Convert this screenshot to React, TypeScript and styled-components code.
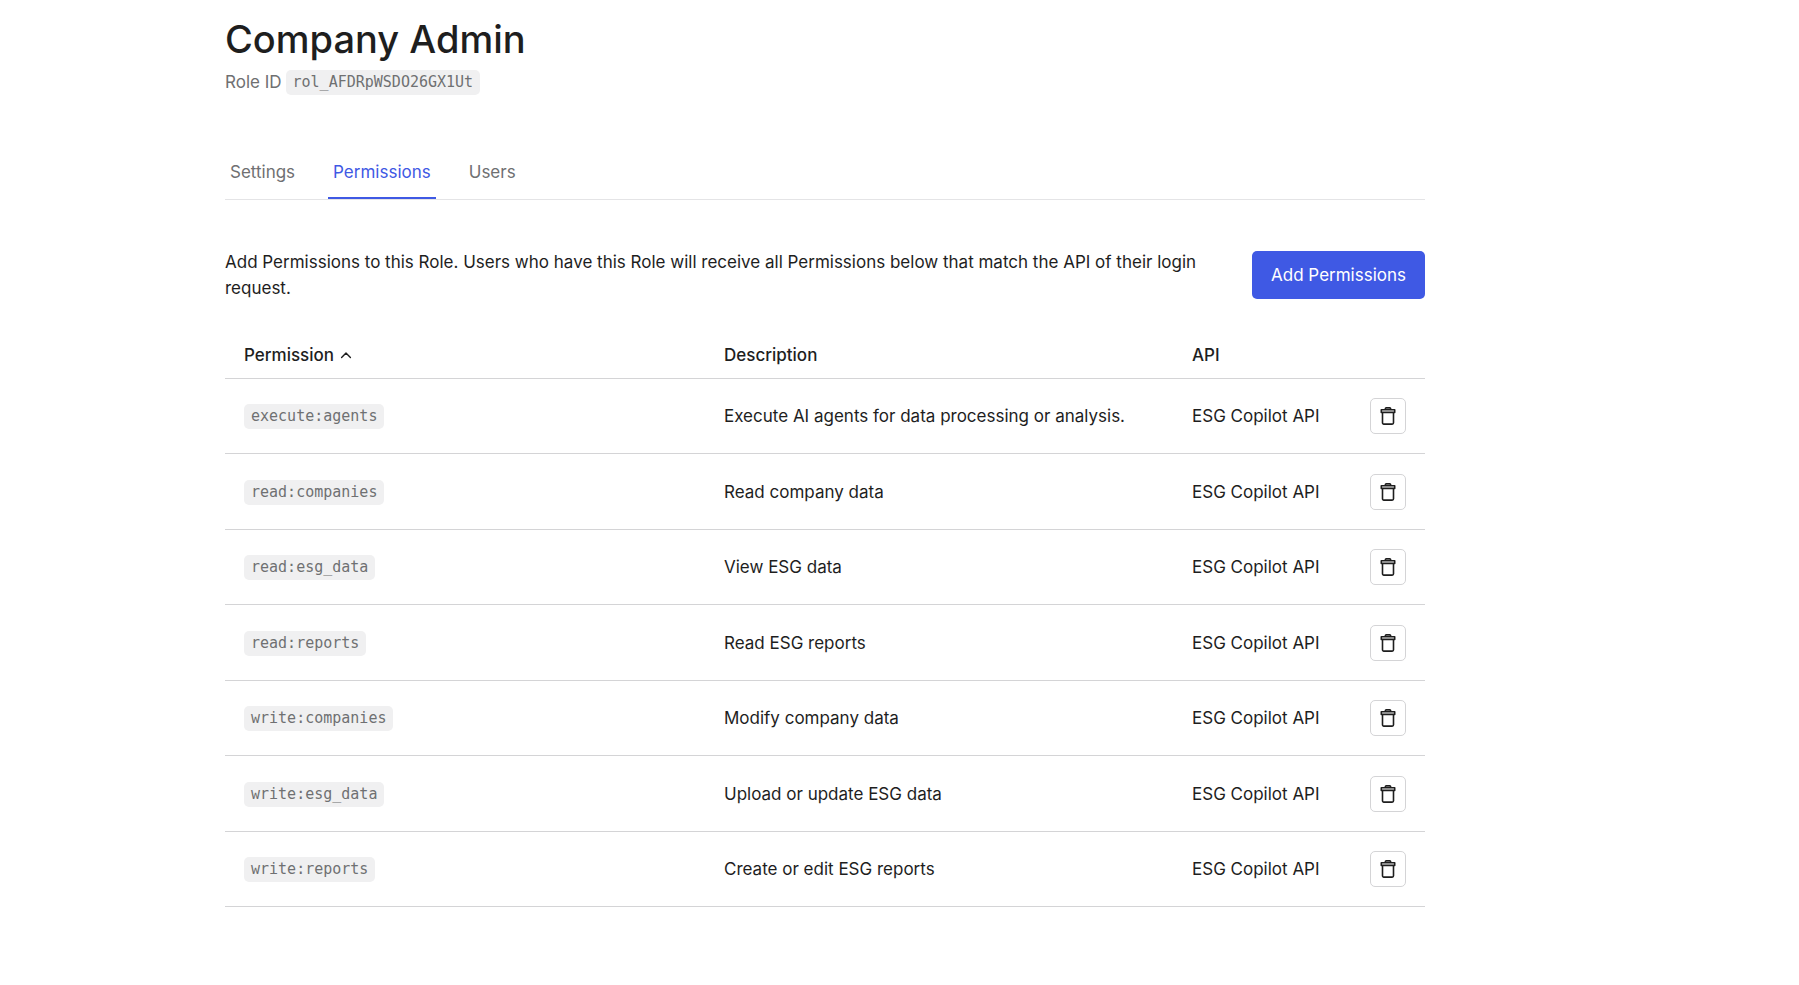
import React from 'react';
import styled, { createGlobalStyle } from 'styled-components';

const ink = '#1e1e1e';
const muted = '#6f7072';
const accent = '#3f59e4';
const line = '#d4d4d6';

const GlobalStyle = createGlobalStyle`
  *, *::before, *::after { box-sizing: border-box; }
  body {
    margin: 0;
    background: #fff;
    color: ${ink};
    font: 400 17px/26px Inter, "Liberation Sans", sans-serif;
  }
`;

const Page = styled.main`
  max-width: 1574px;
  padding: 15px 24px 48px 225px;
`;

const Content = styled.div`
  max-width: 1200px;
`;

const Title = styled.h1`
  margin: 0;
  font-size: 38px;
  line-height: 48px;
  font-weight: 500;
`;

const RoleLine = styled.p`
  display: flex;
  align-items: center;
  gap: 4px;
  margin: 6px 0 0;
  color: ${muted};
`;

const Code = styled.code`
  display: inline-block;
  padding: 0 7px;
  border-radius: 5px;
  background: #f0f0f1;
  color: ${muted};
  font: 400 15px/25px "DejaVu Sans Mono", monospace;
  vertical-align: middle;
`;

const Tabs = styled.nav`
  display: flex;
  gap: 28px;
  margin-top: 50px;
  border-bottom: 1px solid #e4e4e6;
`;

const Tab = styled.a<{ $active?: boolean }>`
  padding: 14px 5px 12px;
  border-bottom: 2px solid ${({ $active }) => ($active ? accent : 'transparent')};
  color: ${({ $active }) => ($active ? accent : muted)};
  text-decoration: none;
`;

const Intro = styled.section`
  display: flex;
  align-items: center;
  justify-content: space-between;
  gap: 48px;
  margin-top: 49px;
`;

const IntroText = styled.p`
  margin: 0;
  flex: 1;
`;

const AddButton = styled.button`
  height: 48px;
  padding: 0 19px;
  border: 0;
  border-radius: 5px;
  background: ${accent};
  color: #fff;
  font: inherit;
  white-space: nowrap;
  cursor: pointer;
`;

const Table = styled.table`
  width: 100%;
  margin-top: 31px;
  border-collapse: separate;
  border-spacing: 0;
  table-layout: fixed;
`;

const Head = styled.th<{ $width?: string }>`
  width: ${({ $width }) => $width ?? 'auto'};
  height: 47px;
  padding: 0 0 0 19px;
  border-bottom: 1px solid ${line};
  font-weight: 500;
  text-align: left;
`;

const SortButton = styled.button`
  display: flex;
  align-items: center;
  gap: 6px;
  padding: 0;
  border: 0;
  background: none;
  color: inherit;
  font: inherit;
  cursor: pointer;
`;

const Row = styled.tr`
  height: 75px;

  &:nth-child(even) {
    height: 76px;
  }
`;

const Cell = styled.td`
  padding: 0 0 0 19px;
  border-bottom: 1px solid ${line};
`;

const ActionCell = styled(Cell)`
  padding: 0 19px 0 0;
`;

const DeleteButton = styled.button`
  display: flex;
  align-items: center;
  justify-content: center;
  width: 36px;
  height: 36px;
  margin-left: auto;
  padding: 0;
  border: 1px solid ${line};
  border-radius: 5px;
  background: #fff;
  color: ${ink};
  cursor: pointer;
`;

const TrashIcon = () => (
  <svg width="16" height="20" viewBox="0 0 16 20" fill="none" stroke="currentColor" strokeWidth="1.6" aria-hidden="true">
    <path d="M1.3 3.8h13.4v2.6H1.3z" strokeLinejoin="round" />
    <path d="M5.4 3.6V2.6a.8.8 0 0 1 .8-.8h3.6a.8.8 0 0 1 .8.8v1" fill="currentColor" fillOpacity="0.4" />
    <path d="M2.5 6.6v10.2a1.3 1.3 0 0 0 1.3 1.3h8.4a1.3 1.3 0 0 0 1.3-1.3V6.6" />
  </svg>
);

const SortIcon = () => (
  <svg width="12" height="8" viewBox="0 0 12 8" fill="none" stroke="currentColor" strokeWidth="1.4" aria-hidden="true">
    <path d="M1.6 6.4 6 2l4.4 4.4" strokeLinecap="round" strokeLinejoin="round" />
  </svg>
);

const permissions = [
  { name: 'execute:agents', description: 'Execute AI agents for data processing or analysis.' },
  { name: 'read:companies', description: 'Read company data' },
  { name: 'read:esg_data', description: 'View ESG data' },
  { name: 'read:reports', description: 'Read ESG reports' },
  { name: 'write:companies', description: 'Modify company data' },
  { name: 'write:esg_data', description: 'Upload or update ESG data' },
  { name: 'write:reports', description: 'Create or edit ESG reports' },
];

export default function App() {
  return (
    <>
      <GlobalStyle />
      <Page>
        <Content>
          <Title>Company Admin</Title>
          <RoleLine>
            <span>Role ID</span>
            <Code>rol_AFDRpWSDO26GX1Ut</Code>
          </RoleLine>
          <Tabs>
            <Tab href="#settings">Settings</Tab>
            <Tab href="#permissions" $active aria-current="page">Permissions</Tab>
            <Tab href="#users">Users</Tab>
          </Tabs>
          <Intro>
            <IntroText>
              Add Permissions to this Role. Users who have this Role will receive all Permissions below that
              match the API of their login request.
            </IntroText>
            <AddButton type="button">Add Permissions</AddButton>
          </Intro>
          <Table>
            <thead>
              <tr>
                <Head scope="col" $width="40%" aria-sort="ascending">
                  <SortButton type="button">
                    Permission
                    <SortIcon />
                  </SortButton>
                </Head>
                <Head scope="col" $width="39%">Description</Head>
                <Head scope="col">API</Head>
                <Head scope="col" $width="72px" aria-label="Actions" />
              </tr>
            </thead>
            <tbody>
              {permissions.map(({ name, description }) => (
                <Row key={name}>
                  <Cell><Code>{name}</Code></Cell>
                  <Cell>{description}</Cell>
                  <Cell>ESG Copilot API</Cell>
                  <ActionCell>
                    <DeleteButton type="button" aria-label={`Remove ${name}`}>
                      <TrashIcon />
                    </DeleteButton>
                  </ActionCell>
                </Row>
              ))}
            </tbody>
          </Table>
        </Content>
      </Page>
    </>
  );
}
